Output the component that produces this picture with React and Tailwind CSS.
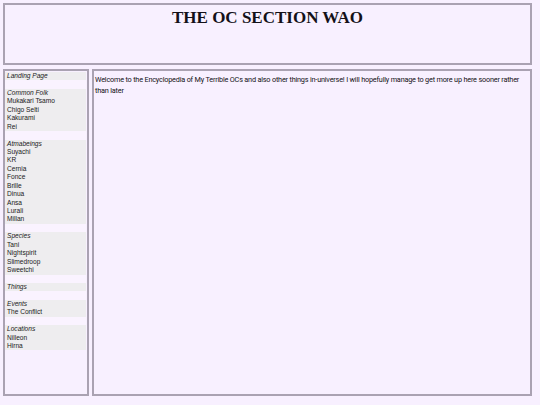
import React from "react";

const sections = [
  { title: "Landing Page", items: [] },
  { title: "Common Folk", items: ["Mukakari Tsamo", "Chigo Selti", "Kakurami", "Rei"] },
  { title: "Atmabeings", items: ["Suyachi", "KR", "Cernia", "Fonce", "Brille", "Dinua", "Ansa", "Lurali", "Millan"] },
  { title: "Species", items: ["Tani", "Nightspirit", "Slimedroop", "Sweetchi"] },
  { title: "Things", items: [] },
  { title: "Events", items: ["The Conflict"] },
  { title: "Locations", items: ["Nilleon", "Hirna"] },
];

export default function App() {
  return (
    <div className="w-[540px] h-[405px] bg-[#f8f0ff] pt-[3px] pl-[3px] pr-[8px] flex flex-col gap-[4px] overflow-hidden">
      <header className="h-[62px] border-2 border-[#aaa2b2] flex justify-center pt-[2px]">
        <h1
          className="text-[17px] font-bold text-[#141018] leading-[22px]"
          style={{ fontFamily: '"Liberation Serif", "DejaVu Serif", serif' }}
        >
          THE OC SECTION WAO
        </h1>
      </header>
      <div className="flex gap-[3px] h-[327px]">
        <nav
          className="w-[86px] shrink-0 border-2 border-[#aaa2b2] pt-[1px] text-[6.6px] text-[#1a1a1a] leading-[8.44px]"
          style={{ fontFamily: '"Liberation Sans", Arial, sans-serif' }}
        >
          {sections.map((s, i) => (
            <div key={s.title}>
              {i > 0 && <div className="h-[8.44px] mr-px bg-[#faf3ff]" />}
              <div className="italic bg-[#eeedef] pl-[2px] mr-px">{s.title}</div>
              {s.items.map((it) => (
                <div key={it} className="bg-[#eeedef] pl-[2px] mr-px">{it}</div>
              ))}
            </div>
          ))}
        </nav>
        <main
          className="flex-1 border-2 border-[#aaa2b2] pt-[3px] pl-[1px] pr-[8px] text-[7.3px] tracking-[-0.2px] leading-[11px] text-[#141216]"
          style={{ fontFamily: 'Roboto, "Noto Sans", sans-serif' }}
        >
          Welcome to the Encyclopedia of My Terrible OCs and also other things in-universe! I will hopefully manage to get more up here sooner rather than later
        </main>
      </div>
    </div>
  );
}
